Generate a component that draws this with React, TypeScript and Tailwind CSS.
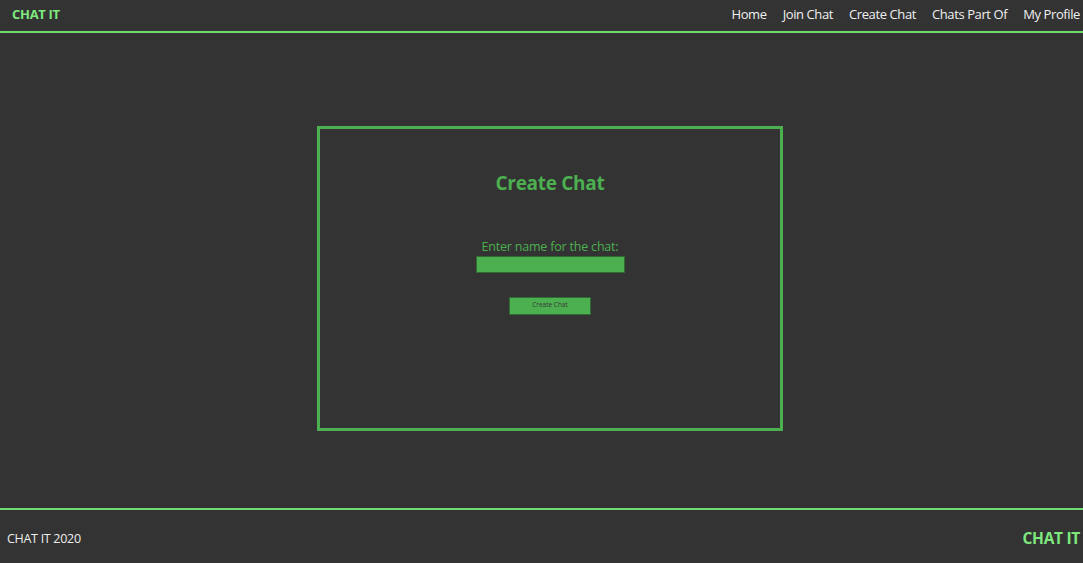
import React from "react";

export default function App() {
  const font = { fontFamily: '"Open Sans", "Noto Sans", sans-serif' };
  return (
    <div className="w-[1083px] h-[563px] bg-[#333333] flex flex-col overflow-hidden" style={font}>
      <header className="h-[33px] flex items-center justify-between pl-[12px] pr-[3px] pb-[2px] border-b-2 border-[#6fdc6f]">
        <span className="text-[#7ee87e] font-bold text-[13px] tracking-[-0.3px]">CHAT IT</span>
        <nav className="flex gap-[16px] text-[#f0f0f0] text-[13px] tracking-[-0.4px]">
          <span>Home</span>
          <span>Join Chat</span>
          <span>Create Chat</span>
          <span>Chats Part Of</span>
          <span>My Profile</span>
        </nav>
      </header>
      <main className="flex-1 pt-[93px] pl-[317px]">
        <div className="w-[466px] h-[305px] border-[3px] border-[#4caf50] flex flex-col items-center">
          <h1 className="mt-[40px] text-[#4caf50] font-bold text-[19px] tracking-[-0.3px]">Create Chat</h1>
          <label className="mt-[41px] text-[#4caf50] text-[12.5px] tracking-[-0.2px] leading-[16px]">Enter name for the chat:</label>
          <input className="mt-[1px] w-[149px] h-[17px] bg-[#4caf50] border border-[#2f6b33] outline-none" />
          <button className="mt-[24px] w-[82px] h-[18px] bg-[#4caf50] border border-[#2f6b33] text-[#3a3a3a] text-[6.5px] leading-none">
            Create Chat
          </button>
        </div>
      </main>
      <footer className="h-[55px] border-t-2 border-[#6fdc6f] flex items-center justify-between pl-[7px] pr-[3px] pt-[5px]">
        <span className="text-[#eeeeee] text-[12.5px] tracking-[-0.3px]">CHAT IT 2020</span>
        <span className="text-[#7ee87e] font-bold text-[15.5px] tracking-[-0.3px]">CHAT IT</span>
      </footer>
    </div>
  );
}
